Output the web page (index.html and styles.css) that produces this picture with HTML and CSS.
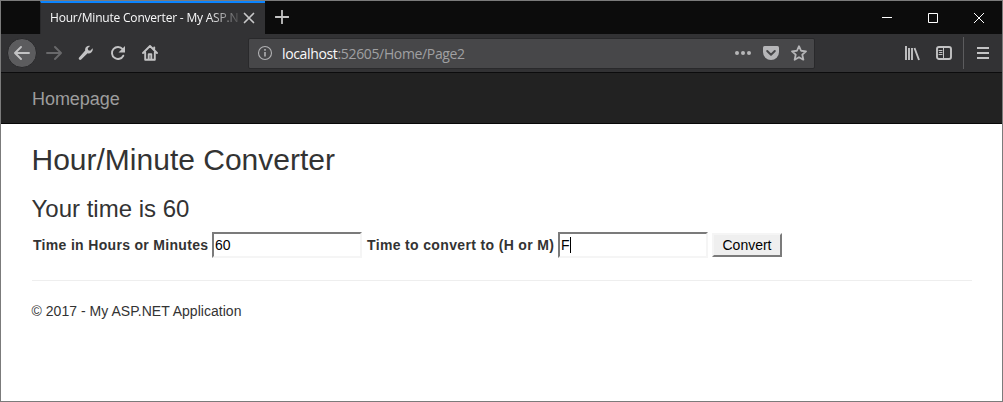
FILE: index.html
```html
<!DOCTYPE html>
<html lang="en">
<head>
<meta charset="utf-8">
<title>Hour/Minute Converter - My ASP.NET Application</title>
<link rel="stylesheet" href="styles.css">
</head>
<body>
<div class="window">
  <div class="tabstrip">
    <div class="tab">
      <span class="tab-title">Hour/Minute Converter - My ASP.N</span>
      <svg class="tab-close" width="12" height="12" viewBox="0 0 12 12"><path d="M1.500 1.500l9 9M10.500 1.500l-9 9" stroke="#c8c8c9" stroke-width="1.700" stroke-linecap="round"/></svg>
    </div>
    <svg class="new-tab" width="14" height="14" viewBox="0 0 14 14"><path d="M7 .5v13M.5 7h13" stroke="#c3c3c3" stroke-width="1.800" stroke-linecap="round"/></svg>
    <div class="controls">
      <svg width="12" height="12" viewBox="0 0 12 12"><path d="M1 5.500h10" stroke="#fff"/></svg>
      <svg width="12" height="12" viewBox="0 0 12 12"><path d="M1.500 1.500h9v9h-9z" fill="none" stroke="#fff"/></svg>
      <svg width="12" height="12" viewBox="0 0 12 12"><path d="M1 1l10 10M11 1L1 11" stroke="#fff"/></svg>
    </div>
  </div>
  <div class="toolbar">
    <div class="back"><svg class="icon" viewBox="0 0 16 16"><path d="M7 2L1 8l6 6M1.500 8H15"/></svg></div>
    <div class="nav-icons">
      <svg class="icon dim" viewBox="0 0 16 16"><path d="M9 2l6 6-6 6M14.500 8H1"/></svg>
      <svg class="icon" viewBox="0 0 16 16"><path class="solid" d="M14.700 3.300l-2.500 2.500-2-.5-.5-2L12 .9C9.800.3 7.300 1.800 7.100 4.300c0 .5 0 .9.100 1.300L1.100 12.500c-1.200 1.400.7 3.200 2.100 2L9.600 8.300c2.600.9 5.800-1.600 5.100-5z"/></svg>
      <svg class="icon" viewBox="0 0 16 16"><path d="M13.300 10.700A6 6 0 1 1 12.600 4.100"/><path class="solid" d="M15 1v6.500H8.500z"/></svg>
      <svg class="icon" viewBox="0 0 16 16"><path d="M1 8l7-7 7 7M3.200 7.500v7.200h9.600V7.500M6.700 14V9.300h2.600V14"/><path d="M12.200 2.500v2"/></svg>
    </div>
    <div class="urlbar">
      <svg class="info" width="16" height="16" viewBox="0 0 16 16"><circle cx="8" cy="8" r="6.500" fill="none" stroke="#b1b1b3" stroke-width="1.100"/><path d="M8 7v4.500M8 4v1.700" stroke="#b1b1b3" stroke-width="1.600"/></svg>
      <span class="url"><span class="host">localhost</span>:52605/Home/Page2</span>
      <div class="actions">
        <svg width="16" height="16" viewBox="0 0 16 16" fill="#b6b6b8"><circle cx="2" cy="8" r="2"/><circle cx="8" cy="8" r="2"/><circle cx="14" cy="8" r="2"/></svg>
        <svg width="16" height="16" viewBox="0 0 16 16"><path d="M1.500 1h13Q16 1 16 2.500V7a8 8 0 0 1-16 0V2.500Q0 1 1.500 1z" fill="#b6b6b8"/><path d="M4.200 6L8 9.700 11.800 6" fill="none" stroke="#474749" stroke-width="2" stroke-linecap="round" stroke-linejoin="round"/></svg>
        <svg width="16" height="16" viewBox="0 0 16 16"><path d="M8 1.200l2.050 4.550 4.950.55-3.700 3.400 1.050 5L8 12.200l-4.350 2.500 1.050-5L1 6.300l4.950-.55z" fill="none" stroke="#b6b6b8" stroke-width="1.800" stroke-linejoin="round"/></svg>
      </div>
    </div>
    <div class="tools">
      <svg class="icon library" viewBox="0 0 16 16"><path d="M2 1v14M5 3v12M8 3v12M10.500 3l4.500 12"/></svg>
      <svg class="icon" viewBox="0 0 16 16"><rect x="1" y="2" width="14" height="12" rx="2"/><path class="thin" d="M7.500 2v12M3 5.500h3M3.500 7.500H6M3 9.500h3"/></svg>
    </div>
    <div class="menu"><svg width="12" height="16" viewBox="0 0 12 16"><path d="M0 3h12M0 8h12M0 13h12" stroke="#c3c3c4" stroke-width="2"/></svg></div>
  </div>
  <nav class="navbar"><a class="brand">Homepage</a></nav>
  <main class="content">
    <h2>Hour/Minute Converter</h2>
    <h3>Your time is 60</h3>
    <div class="form">
      <label class="label-time">Time in Hours or Minutes</label>
      <div class="field">60</div>
      <label class="label-unit">Time to convert to (H or M)</label>
      <div class="field">F<span class="caret"></span></div>
      <button class="convert">Convert</button>
    </div>
    <hr>
    <footer>© 2017 - My ASP.NET Application</footer>
  </main>
</div>
</body>
</html>
```
FILE: styles.css
```css
* { box-sizing: border-box; }
body { margin: 0; font-family: "Liberation Sans", Arial, sans-serif; font-size: 14px; color: #333; }
svg { display: block; flex: none; }
.window { width: 1003px; height: 402px; border: 1px solid #7b7b7b; background: #fff; overflow: hidden; }

.tabstrip { height: 33px; display: flex; background: #0c0c0c; font-family: "Open Sans", "Noto Sans", sans-serif; }
.tab { width: 225px; margin-left: 39px; height: 33px; border-top: 2px solid #0a84ff; border-left: 1px solid #29292b; background: #323234; display: flex; align-items: center; padding-left: 9px; }
.tab-title { width: 190px; margin-top: -2px; overflow: hidden; white-space: nowrap; font-size: 12px; letter-spacing: -.2px; color: #f9f9fa; -webkit-mask-image: linear-gradient(to right, #000 158px, transparent 194px); mask-image: linear-gradient(to right, #000 158px, transparent 194px); }
.tab-close { margin: -2px 0 0 3px; }
.new-tab { margin: 9px 0 0 10px; }
.controls { margin-left: auto; margin-right: 17px; padding-top: 11px; display: flex; gap: 34px; }

.toolbar { height: 39px; display: flex; align-items: center; background: #323234; border-bottom: 1px solid #0c0c0d; }
.back { width: 30px; height: 30px; margin-left: 6px; border: 1px solid #29292b; border-radius: 50%; background: #5c5c5e; display: flex; align-items: center; justify-content: center; }
.icon { width: 16px; height: 16px; fill: none; stroke: #c3c3c4; stroke-width: 1.9; stroke-linecap: round; stroke-linejoin: round; }
.icon .solid { fill: #c3c3c4; stroke: none; }
.icon .thin { stroke-width: 1; }
.library { stroke-linecap: butt; }
.dim { stroke: #69696b; }
.nav-icons { display: flex; gap: 16px; margin-left: 9px; }
.urlbar { width: 567px; height: 31px; margin-left: 90px; border: 1px solid #29292b; border-radius: 2px; background: #474749; display: flex; align-items: center; padding: 0 7px 0 8px; }
.url { margin-left: 9px; font-family: "Open Sans", "Noto Sans", sans-serif; font-size: 14px; letter-spacing: -.35px; color: #a0a0a2; white-space: nowrap; }
.host { color: #f9f9fa; }
.actions { display: flex; gap: 12px; margin-left: auto; }
.tools { display: flex; gap: 16px; margin-left: 89px; }
.menu { height: 32px; margin-left: 11px; padding-left: 13px; border-left: 1px solid #5c5c5e; display: flex; align-items: center; }

.navbar { height: 51px; background: #222; border-bottom: 1px solid #080808; padding: 16px 31px; }
.brand { display: block; font-size: 18px; line-height: 20px; letter-spacing: -.05px; color: #9d9d9d; }
.content { padding: 0 29px 0 30.500px; }
h2 { margin: 19px 0 10px; font-size: 30px; line-height: 33px; }
h3 { margin: 20px 0 10px; font-size: 24px; line-height: 26px; }
h2, h3 { font-weight: 400; }
.form { display: flex; align-items: center; height: 26px; padding-left: 1.500px; }
label { font-weight: 700; white-space: nowrap; }
.label-time { width: 179px; letter-spacing: .32px; }
.label-unit { width: 191px; margin-left: 5px; letter-spacing: .35px; }
.field { width: 150px; height: 26px; border: 2px solid; border-color: #7b7b7b #f5f5f5 #f5f5f5 #7b7b7b; padding-left: 1px; display: flex; align-items: center; color: #000; }
.caret { width: 1px; height: 16px; background: #000; }
.convert { width: 70px; height: 24px; margin-left: 4px; padding: 0; border: 2px solid; border-color: #f5f5f5 #7b7b7b #7b7b7b #f5f5f5; background: #efefef; font: 14px "Liberation Sans", Arial, sans-serif; color: #000; }
hr { margin: 22px 1px 20px 0; border: 0; border-top: 1px solid #eee; }
footer { line-height: 20px; letter-spacing: .03px; }
```
